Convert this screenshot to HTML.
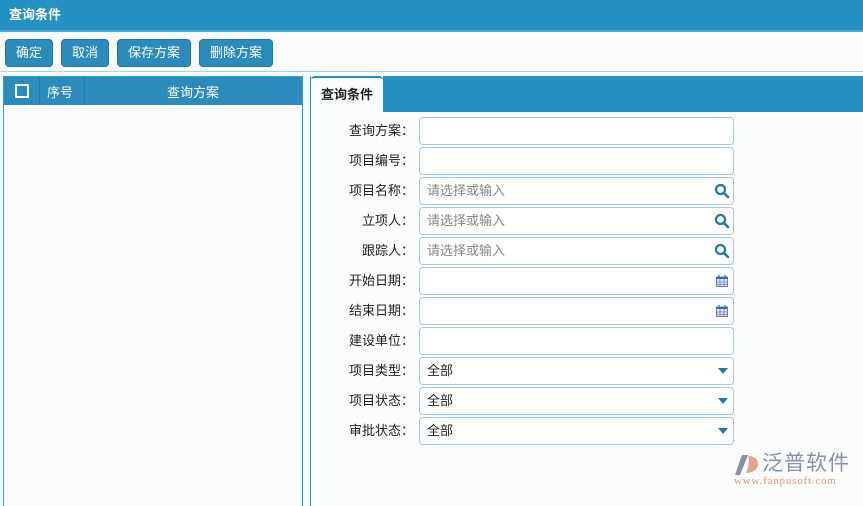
<!DOCTYPE html>
<html><head><meta charset="utf-8"><style>
*{box-sizing:border-box;margin:0;padding:0}
body{width:863px;height:499px;overflow:hidden;background:#fbfdfd;font-family:"Liberation Sans","Noto Sans CJK SC",sans-serif;font-size:13px;position:relative;color:#222}
.abs{position:absolute}
.top{left:0;top:0;width:863px;height:32px;background:#2391c1;color:#fff;font-weight:bold;font-size:13px;line-height:29px;padding-left:9px;border-bottom:2px solid #4aa9d3}
.btn{top:39px;height:28px;background:#2a8bbc;border:1px solid #1f7aa8;border-radius:4px;color:#fff;text-align:center;line-height:26px;font-size:13px}
.sep{left:0;top:71px;width:863px;height:1px;background:#a9d3ea}
.lp{left:3px;top:76px;width:300px;height:430px;border-left:1px solid #2aa0d8;border-right:1px solid #2aa0d8;border-top:1px solid #2aa0d8}
.lh{left:4px;top:77px;width:298px;height:28px;background:#2a8bbc;color:#fff}
.rp{left:310px;top:76px;width:1px;height:430px;background:#2aa0d8}
.bar{left:383px;top:76px;width:480px;height:36px;background:#2391c1}
.tab{left:311px;top:76px;width:72px;height:36px;background:#fbfdfd;border-top:2px solid #2391c1;border-radius:4px 4px 0 0;font-weight:bold;line-height:34px;padding-left:10px}
.lbl{left:306px;width:108px;text-align:right;line-height:28px}
.inp{left:419px;width:315px;height:28px;border:1px solid #a9c9e2;border-radius:4px;background:#fff;line-height:26px;padding-left:7px}
.ph{color:#888}
.ic{position:absolute;right:3px;top:5px}
</style></head><body>
<div class="abs top">查询条件</div>
<div class="abs btn" style="left:5px;width:48px">确定</div>
<div class="abs btn" style="left:61px;width:48px">取消</div>
<div class="abs btn" style="left:117px;width:74px">保存方案</div>
<div class="abs btn" style="left:199px;width:74px">删除方案</div>
<div class="abs sep"></div>
<div class="abs lp"></div>
<div class="abs lh">
 <div class="abs" style="left:11px;top:7px;width:14px;height:14px;border:2px solid #fff"></div>
 <div class="abs" style="left:35px;top:0;height:28px;width:1px;background:#2079a6"></div>
 <div class="abs" style="left:43px;top:5px">序号</div>
 <div class="abs" style="left:80px;top:0;height:28px;width:1px;background:#2079a6"></div>
 <div class="abs" style="left:163px;top:5px">查询方案</div>
</div>
<div class="abs rp"></div>
<div class="abs bar"></div>
<div class="abs tab">查询条件</div>
<div class="abs lbl" style="top:117px">查询方案：</div><div class="abs inp" style="top:117px"></div>
<div class="abs lbl" style="top:147px">项目编号：</div><div class="abs inp" style="top:147px"></div>
<div class="abs lbl" style="top:177px">项目名称：</div><div class="abs inp ph" style="top:177px">请选择或输入<svg class="ic" width="16" height="16" viewBox="0 0 16 16"><circle cx="6.5" cy="6.5" r="4.5" fill="none" stroke="#1f7aa8" stroke-width="2.2"/><path d="M10 10l4 4" stroke="#1f7aa8" stroke-width="2.6" stroke-linecap="round"/></svg></div>
<div class="abs lbl" style="top:207px">立项人：</div><div class="abs inp ph" style="top:207px">请选择或输入<svg class="ic" width="16" height="16" viewBox="0 0 16 16"><circle cx="6.5" cy="6.5" r="4.5" fill="none" stroke="#1f7aa8" stroke-width="2.2"/><path d="M10 10l4 4" stroke="#1f7aa8" stroke-width="2.6" stroke-linecap="round"/></svg></div>
<div class="abs lbl" style="top:237px">跟踪人：</div><div class="abs inp ph" style="top:237px">请选择或输入<svg class="ic" width="16" height="16" viewBox="0 0 16 16"><circle cx="6.5" cy="6.5" r="4.5" fill="none" stroke="#1f7aa8" stroke-width="2.2"/><path d="M10 10l4 4" stroke="#1f7aa8" stroke-width="2.6" stroke-linecap="round"/></svg></div>
<div class="abs lbl" style="top:267px">开始日期：</div><div class="abs inp" style="top:267px"><svg class="ic" style="right:5px;top:7px" width="12" height="12" viewBox="0 0 12 12"><rect x="0.5" y="2" width="11" height="9.5" fill="#dfe9f5" stroke="#6a7fb5"/><rect x="0.5" y="2" width="11" height="2" fill="#2d6fb8"/><path d="M4 4v8M8 4v8M0 7h12M0 9.5h12" stroke="#6a7fb5" stroke-width=".8"/><path d="M3 0v3M9 0v3" stroke="#2d6fb8" stroke-width="1.2"/></svg></div>
<div class="abs lbl" style="top:297px">结束日期：</div><div class="abs inp" style="top:297px"><svg class="ic" style="right:5px;top:7px" width="12" height="12" viewBox="0 0 12 12"><rect x="0.5" y="2" width="11" height="9.5" fill="#dfe9f5" stroke="#6a7fb5"/><rect x="0.5" y="2" width="11" height="2" fill="#2d6fb8"/><path d="M4 4v8M8 4v8M0 7h12M0 9.5h12" stroke="#6a7fb5" stroke-width=".8"/><path d="M3 0v3M9 0v3" stroke="#2d6fb8" stroke-width="1.2"/></svg></div>
<div class="abs lbl" style="top:327px">建设单位：</div><div class="abs inp" style="top:327px"></div>
<div class="abs lbl" style="top:357px">项目类型：</div><div class="abs inp" style="top:357px">全部<svg class="ic" style="right:5px;top:10px" width="10" height="6"><path d="M0 0h10L5 6z" fill="#1f7aa8"/></svg></div>
<div class="abs lbl" style="top:387px">项目状态：</div><div class="abs inp" style="top:387px">全部<svg class="ic" style="right:5px;top:10px" width="10" height="6"><path d="M0 0h10L5 6z" fill="#1f7aa8"/></svg></div>
<div class="abs lbl" style="top:417px">审批状态：</div><div class="abs inp" style="top:417px">全部<svg class="ic" style="right:5px;top:10px" width="10" height="6"><path d="M0 0h10L5 6z" fill="#1f7aa8"/></svg></div>
<svg class="abs" style="left:734px;top:454px" width="28" height="22" viewBox="0 0 28 22"><path d="M8 1h6L6 21H1z" fill="#8890a8"/><path d="M14 2c6 0 10 3 10 8s-5 9-12 9c2-5 4-11 2-17z" fill="#e0a48c"/></svg>
<div class="abs" style="left:762px;top:452px;font-size:21px;color:#8a90a6;letter-spacing:1px;line-height:24px">泛普软件</div>
<div class="abs" style="left:734px;top:475px;font-size:11px;color:#e09a80;font-family:'Liberation Serif',serif;letter-spacing:0.8px">www.fanpusoft.com</div>
</body></html>
